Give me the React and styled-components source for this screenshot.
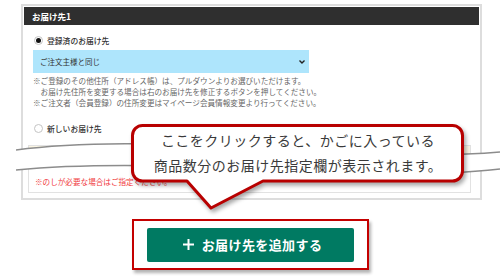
import React from "react";
import styled, { createGlobalStyle } from "styled-components";

const Global = createGlobalStyle`
  html, body {
    margin: 0;
    padding: 0;
    background: #fff;
  }
  body {
    font-family: "Noto Sans CJK JP", "Noto Sans", sans-serif;
  }
`;

const Page = styled.div`
  position: relative;
  width: 500px;
  height: 280px;
  overflow: hidden;
  padding-top: 4px;
  box-sizing: border-box;
`;

const Panel = styled.section`
  margin-left: 21px;
  width: 461px;
  box-sizing: border-box;
  border: 2px solid #dddddd;
  padding: 1px 1px 5px;
  background: #fff;
`;

const Header = styled.div`
  height: 18px;
  background: #2f2f2f;
  color: #fff;
  font-size: 8.5px;
  font-weight: 700;
  line-height: 18px;
  padding-left: 8px;
`;

const Body = styled.div`
  padding: 0 4px;
`;

const RadioRow = styled.label`
  display: flex;
  align-items: center;
  gap: 4px;
  height: 12px;
  margin-top: ${({ $top }) => $top}px;
  padding-left: 6px;
  font-size: 7.8px;
  font-weight: 500;
  color: #333;
`;

const Radio = styled.span`
  width: 9px;
  height: 9px;
  border-radius: 50%;
  box-sizing: border-box;
  border: 1px solid #c4c4c4;
  background: #fff;
  display: flex;
  align-items: center;
  justify-content: center;

  &::after {
    content: "";
    width: 5px;
    height: 5px;
    border-radius: 50%;
    background: ${({ $checked }) => ($checked ? "#111" : "transparent")};
  }
`;

const Select = styled.div`
  margin: 4px 0 0 5px;
  width: 276px;
  height: 23px;
  box-sizing: border-box;
  background: #aee5fc;
  display: flex;
  align-items: center;
  justify-content: space-between;
  padding: 0 4px 0 7px;
  font-size: 7.5px;
  color: #333;
`;

const Notes = styled.div`
  margin: 2px 0 0 5px;
  font-size: 7.6px;
  line-height: 11px;
  color: #666;
  white-space: nowrap;
`;

const NoshiBox = styled.div`
  margin: 11px 4px 0 0;
  height: 48px;
  box-sizing: border-box;
  border: 1px solid #e2e2e2;
  display: flex;
  flex-direction: column;
`;

const NoshiHead = styled.div`
  height: 10px;
  background: #faf5e3;
`;

const NoshiText = styled.div`
  padding: 20px 0 0 6px;
  font-size: 7.6px;
  color: #f0383c;
  white-space: nowrap;
`;

const ButtonRow = styled.div`
  margin-top: 19px;
  display: flex;
  justify-content: center;
`;

const Highlight = styled.div`
  margin-left: 1px;
  border: 2.5px solid #c40000;
  padding: 6.5px 13px;
  box-shadow: 2px 3px 3px rgba(0, 0, 0, 0.3);
`;

const AddButton = styled.button`
  width: 207px;
  height: 34px;
  border: 0;
  border-radius: 2px;
  background: #007a62;
  color: #fff;
  font-family: inherit;
  font-size: 13px;
  font-weight: 700;
  letter-spacing: 0.4px;
  display: flex;
  align-items: center;
  justify-content: center;
  gap: 8px;
  padding: 0 0 0 4px;
`;

const Tear = styled.svg`
  position: absolute;
  left: 16px;
  top: 138px;
`;

const Callout = styled.div`
  position: absolute;
  left: 131px;
  top: 124px;
  width: 334px;
  height: 88px;
`;

const Bubble = styled.svg`
  position: absolute;
  inset: 0;
  filter: drop-shadow(2px 3px 2px rgba(0, 0, 0, 0.35));
`;

const CalloutText = styled.p`
  position: relative;
  margin: 0;
  padding-top: 4px;
  text-align: center;
  font-size: 14px;
  line-height: 25px;
  letter-spacing: 0.5px;
  color: #3a3a3a;
  white-space: nowrap;
`;

const Chevron = () => (
  <svg width="6" height="4" viewBox="0 0 6 4">
    <path d="M0.5 0.5 L3 3 L5.5 0.5" fill="none" stroke="#222" strokeWidth="1.4" />
  </svg>
);

const PlusIcon = () => (
  <svg width="11" height="11" viewBox="0 0 11 11">
    <path d="M5.5 0 V11 M0 5.5 H11" stroke="#fff" strokeWidth="2" />
  </svg>
);

const line1 = "M0 12 C60 4, 150 4, 240 10 S420 20, 484 14";
const line2 = "M0 32 C60 26, 150 26, 240 32 S420 38, 484 31";

export default function App() {
  return (
    <Page>
      <Global />
      <Panel>
        <Header>お届け先1</Header>
        <Body>
          <RadioRow $top={9}>
            <Radio $checked />
            登録済のお届け先
          </RadioRow>
          <Select>
            ご注文主様と同じ
            <Chevron />
          </Select>
          <Notes>
            <div>※ご登録のその他住所（アドレス帳）は、プルダウンよりお選びいただけます。</div>
            <div>　お届け先住所を変更する場合は右のお届け先を修正するボタンを押してください。</div>
            <div>※ご注文者（会員登録）の住所変更はマイページ会員情報変更より行ってください。</div>
          </Notes>
          <RadioRow $top={14}>
            <Radio />
            新しいお届け先
          </RadioRow>
          <NoshiBox>
            <NoshiHead />
            <NoshiText>※のしが必要な場合はご指定ください。</NoshiText>
          </NoshiBox>
        </Body>
      </Panel>

      <ButtonRow>
        <Highlight>
          <AddButton>
            <PlusIcon />
            お届け先を追加する
          </AddButton>
        </Highlight>
      </ButtonRow>

      <Tear width="484" height="42" viewBox="0 0 484 42">
        <path
          d={`${line1} L484 31 C420 38, 330 30, 240 32 C150 26, 60 26, 0 32 Z`}
          fill="#fff"
        />
        <path d={line1} fill="none" stroke="#8c8c8c" strokeWidth="1.5" />
        <path d={line2} fill="none" stroke="#8c8c8c" strokeWidth="1.5" />
      </Tear>

      <Callout>
        <Bubble width="334" height="88" viewBox="0 0 334 88">
          <path
            d="M11.5 1.5 H321.5 A10 10 0 0 1 331.5 11.5 V47 A10 10 0 0 1 321.5 57 H132 L80 84 L56 57 H11.5 A10 10 0 0 1 1.5 47 V11.5 A10 10 0 0 1 11.5 1.5 Z"
            fill="#fff"
            stroke="#b80000"
            strokeWidth="3"
            strokeLinejoin="round"
          />
        </Bubble>
        <CalloutText>
          ここをクリックすると、かごに入っている
          <br />
          商品数分のお届け先指定欄が表示されます。
        </CalloutText>
      </Callout>
    </Page>
  );
}
